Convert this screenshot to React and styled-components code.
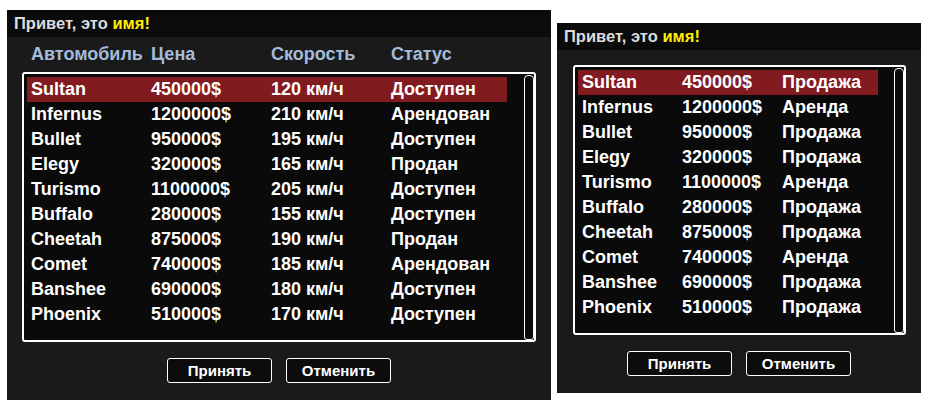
import React from "react";
import styled, { createGlobalStyle } from "styled-components";

const Global = createGlobalStyle`
  body {
    margin: 0;
    background: #fff;
    font-family: "Liberation Sans", Arial, sans-serif;
  }
`;

const Page = styled.div`
  display: flex;
  align-items: flex-start;
  gap: 6px;
  padding: 10px 0 0 7px;
`;

const Panel = styled.div`
  width: ${(p) => p.$width}px;
  margin-top: ${(p) => p.$top || 0}px;
  background: #1a1a1a;
  display: flex;
  flex-direction: column;
  padding-bottom: 17px;
`;

const Header = styled.div`
  height: 27px;
  background: #0b0b0b;
  padding-left: 7px;
  display: flex;
  align-items: center;
  font-size: 16.5px;
  font-weight: bold;
  color: #dcdcdc;
`;

const Name = styled.span`
  color: #ffee00;
`;

const Columns = styled.div`
  display: flex;
  height: 35px;
  align-items: center;
  padding-left: 24px;
  font-size: 18px;
  font-weight: bold;
  color: #a3bcdc;
`;

const ColTitle = styled.div`
  width: ${(p) => p.$w}px;
`;

const ListBox = styled.div`
  margin: ${(p) => p.$top || 0}px 15px 0 ${(p) => p.$left || 15}px;
  height: 270px;
  box-sizing: border-box;
  border: 2px solid #fff;
  border-radius: 3px;
  background: #0a0a0a;
  display: flex;
  justify-content: space-between;
`;

const Rows = styled.div`
  padding: 3px 0 0 3px;
`;

const Row = styled.div`
  display: flex;
  height: 25px;
  align-items: center;
  background: ${(p) => (p.$active ? "#821b1f" : "transparent")};
  font-size: 18px;
  font-weight: bold;
  color: #fff;
`;

const Cell = styled.div`
  width: ${(p) => p.$w}px;
  padding-left: 4px;
  box-sizing: border-box;
  white-space: nowrap;
`;

const Scroll = styled.div`
  width: 10px;
  margin-top: 1px;
  box-sizing: border-box;
  border: 1.5px solid #fff;
  border-radius: 4px 4px 3px 3px;
`;

const Buttons = styled.div`
  display: flex;
  justify-content: center;
  gap: 14px;
  margin-top: 16px;
`;

const Button = styled.button`
  width: 105px;
  height: 25px;
  background: #0c0c0c;
  border: 1px solid #fff;
  border-radius: 3px;
  color: #fff;
  font-family: "Liberation Sans", Arial, sans-serif;
  font-size: 15px;
  font-weight: bold;
  padding: 0;
`;

const cars = [
  ["Sultan", "450000$", "120 км/ч", "Доступен", "Продажа"],
  ["Infernus", "1200000$", "210 км/ч", "Арендован", "Аренда"],
  ["Bullet", "950000$", "195 км/ч", "Доступен", "Продажа"],
  ["Elegy", "320000$", "165 км/ч", "Продан", "Продажа"],
  ["Turismo", "1100000$", "205 км/ч", "Доступен", "Аренда"],
  ["Buffalo", "280000$", "155 км/ч", "Доступен", "Продажа"],
  ["Cheetah", "875000$", "190 км/ч", "Продан", "Продажа"],
  ["Comet", "740000$", "185 км/ч", "Арендован", "Аренда"],
  ["Banshee", "690000$", "180 км/ч", "Доступен", "Продажа"],
  ["Phoenix", "510000$", "170 км/ч", "Доступен", "Продажа"],
];

function Greeting() {
  return (
    <Header>
      Привет, это&nbsp;<Name>имя!</Name>
    </Header>
  );
}

function Actions() {
  return (
    <Buttons>
      <Button>Принять</Button>
      <Button>Отменить</Button>
    </Buttons>
  );
}

export default function App() {
  return (
    <>
      <Global />
      <Page>
        <Panel $width={544}>
          <Greeting />
          <Columns>
            <ColTitle $w={120}>Автомобиль</ColTitle>
            <ColTitle $w={120}>Цена</ColTitle>
            <ColTitle $w={120}>Скорость</ColTitle>
            <ColTitle $w={120}>Статус</ColTitle>
          </Columns>
          <ListBox>
            <Rows>
              {cars.map((c, i) => (
                <Row key={c[0]} $active={i === 0}>
                  <Cell $w={120}>{c[0]}</Cell>
                  <Cell $w={120}>{c[1]}</Cell>
                  <Cell $w={120}>{c[2]}</Cell>
                  <Cell $w={120}>{c[3]}</Cell>
                </Row>
              ))}
            </Rows>
            <Scroll />
          </ListBox>
          <Actions />
        </Panel>
        <Panel $width={364} $top={13}>
          <Greeting />
          <ListBox $top={15} $left={16}>
            <Rows>
              {cars.map((c, i) => (
                <Row key={c[0]} $active={i === 0}>
                  <Cell $w={100}>{c[0]}</Cell>
                  <Cell $w={100}>{c[1]}</Cell>
                  <Cell $w={100}>{c[4]}</Cell>
                </Row>
              ))}
            </Rows>
            <Scroll />
          </ListBox>
          <Actions />
        </Panel>
      </Page>
    </>
  );
}
